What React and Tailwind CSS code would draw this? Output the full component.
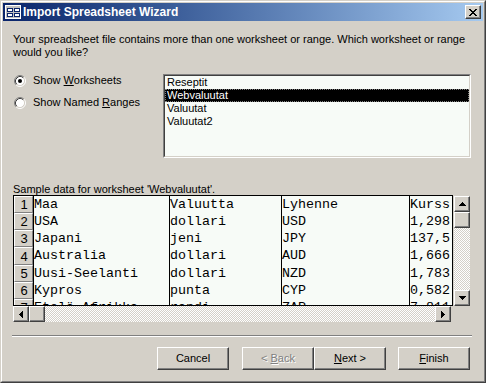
import React from "react";

const raised =
  "border border-t-white border-l-white border-r-[#404040] border-b-[#404040] shadow-[inset_-1px_-1px_0_#808080] bg-[#d4d0c8]";

function Tri({ dir }) {
  if (dir === "up")
    return (
      <svg width="7" height="4" shapeRendering="crispEdges">
        <path d="M3 0h1v1h-1z M2 1h3v1h-3z M1 2h5v1h-5z M0 3h7v1h-7z" fill="#000" />
      </svg>
    );
  if (dir === "down")
    return (
      <svg width="7" height="4" shapeRendering="crispEdges">
        <path d="M0 0h7v1h-7z M1 1h5v1h-5z M2 2h3v1h-3z M3 3h1v1h-1z" fill="#000" />
      </svg>
    );
  if (dir === "left")
    return (
      <svg width="4" height="7" shapeRendering="crispEdges">
        <path d="M0 3h1v1h-1z M1 2h1v3h-1z M2 1h1v5h-1z M3 0h1v7h-1z" fill="#000" />
      </svg>
    );
  return (
    <svg width="4" height="7" shapeRendering="crispEdges">
      <path d="M0 0h1v7h-1z M1 1h1v5h-1z M2 2h1v3h-1z M3 3h1v1h-1z" fill="#000" />
    </svg>
  );
}

function ArrowBtn({ dir }) {
  return (
    <div className={`${raised} w-[16px] h-[16px] shrink-0 flex items-center justify-center`}>
      <Tri dir={dir} />
    </div>
  );
}

function Thumb() {
  return <div className={`${raised} w-[16px] h-[16px] shrink-0`} />;
}

const checker =
  "bg-[image:repeating-conic-gradient(#ffffff_0_25%,#d4d0c8_0_50%)] bg-[length:2px_2px]";

function Radio({ checked }) {
  return (
    <svg width="12" height="12" viewBox="0 0 12 12" className="shrink-0">
      <circle cx="6" cy="6" r="4.5" fill="#fff" />
      <path d="M2.11 9.89 A5.5 5.5 0 0 1 9.89 2.11" fill="none" stroke="#808080" strokeWidth="1" />
      <path d="M9.89 2.11 A5.5 5.5 0 0 1 2.11 9.89" fill="none" stroke="#ffffff" strokeWidth="1" />
      <path d="M2.82 9.18 A4.5 4.5 0 0 1 9.18 2.82" fill="none" stroke="#404040" strokeWidth="1" />
      <path d="M9.18 2.82 A4.5 4.5 0 0 1 2.82 9.18" fill="none" stroke="#d4d0c8" strokeWidth="1" />
      {checked && <circle cx="6" cy="6" r="2" fill="#000" />}
    </svg>
  );
}

const rows = [
  ["1", "Maa", "Valuutta", "Lyhenne", "Kurss", "h-[17px]"],
  ["2", "USA", "dollari", "USD", "1,298", "h-[17px]"],
  ["3", "Japani", "jeni", "JPY", "137,5", "h-[17px]"],
  ["4", "Australia", "dollari", "AUD", "1,666", "h-[18px]"],
  ["5", "Uusi-Seelanti", "dollari", "NZD", "1,783", "h-[17px]"],
  ["6", "Kypros", "punta", "CYP", "0,582", "h-[17px]"],
  ["7", "Etelä-Afrikka", "randi", "ZAR", "7,811", "h-[17px]"],
];

export default function App() {
  return (
    <div className="w-[486px] h-[383px] bg-[#d4d0c8] border border-t-[#d4d0c8] border-l-[#d4d0c8] border-r-[#404040] border-b-[#404040] font-['Liberation_Sans',Arial,sans-serif] text-[11px] text-black overflow-hidden">
      <div className="h-full border border-t-white border-l-white border-r-[#808080] border-b-[#808080] p-px flex flex-col">
        {/* Title bar */}
        <div className="h-[18px] shrink-0 flex items-center bg-linear-to-r from-[#0a246a] to-[#a6caf0]">
          <div className="w-[19px] h-[18px] flex items-center justify-center pl-[1px]">
            <svg width="16" height="14" viewBox="0 0 16 14" shapeRendering="crispEdges">
              <rect x="0" y="0" width="16" height="14" fill="#ffffff" />
              <rect x="1" y="1" width="14" height="12" fill="#c0c0c0" />
              <rect x="2" y="3" width="5" height="3" fill="#ffffff" stroke="#0a246a" strokeWidth="1" />
              <rect x="2" y="8" width="5" height="3" fill="#ffffff" stroke="#0a246a" strokeWidth="1" />
              <rect x="9" y="3" width="5" height="3" fill="#ffffff" stroke="#0a246a" strokeWidth="1" />
              <rect x="9" y="8" width="5" height="3" fill="#ffffff" stroke="#0a246a" strokeWidth="1" />
            </svg>
          </div>
          <div className="text-white font-bold text-[12px] leading-[18px] ml-[1px]">Import Spreadsheet Wizard</div>
          <div className={`${raised} ml-auto mr-[2px] w-[16px] h-[14px] flex items-center justify-center`}>
            <svg width="8" height="7" shapeRendering="crispEdges">
              <path
                d="M0 0h2v1h-2z M6 0h2v1h-2z M1 1h2v1h-2z M5 1h2v1h-2z M2 2h4v1h-4z M3 3h2v1h-2z M2 4h4v1h-4z M1 5h2v1h-2z M5 5h2v1h-2z M0 6h2v1h-2z M6 6h2v1h-2z"
                fill="#000"
              />
            </svg>
          </div>
        </div>

        {/* Intro text */}
        <div className="pl-[10px] pt-[12px] leading-[13px]">
          Your spreadsheet file contains more than one worksheet or range. Which worksheet or range
          <br />
          would you like?
        </div>

        {/* Radios + list */}
        <div className="mt-[15px] pl-[11px] flex">
          <div className="w-[149px] flex flex-col gap-[9px]">
            <div className="h-[13px] flex items-center">
              <Radio checked />
              <span className="ml-[7px] leading-[13px]">
                Show <span className="underline underline-offset-1">W</span>orksheets
              </span>
            </div>
            <div className="h-[13px] flex items-center">
              <Radio />
              <span className="ml-[7px] leading-[13px]">
                Show Named <span className="underline underline-offset-1">R</span>anges
              </span>
            </div>
          </div>
          <div className="w-[308px] h-[84px] border border-t-[#808080] border-l-[#808080] border-r-white border-b-white">
            <div className="h-full border border-t-[#404040] border-l-[#404040] border-r-[#d4d0c8] border-b-[#d4d0c8] bg-[#f7fbf7]">
              <div className="h-[13px] leading-[13px] pl-[2px]">Reseptit</div>
              <div className="h-[13px] leading-[13px] pl-[2px] bg-black text-white outline outline-1 outline-dotted outline-[#808080] -outline-offset-1">
                Webvaluutat
              </div>
              <div className="h-[13px] leading-[13px] pl-[2px]">Valuutat</div>
              <div className="h-[13px] leading-[13px] pl-[2px]">Valuutat2</div>
            </div>
          </div>
        </div>

        {/* Sample data label */}
        <div className="mt-[25px] pl-[10px] leading-[12px] h-[12px]">Sample data for worksheet 'Webvaluutat'.</div>

        {/* Grid */}
        <div className="pl-[10px] flex flex-col">
          <div className="flex">
            <div className="w-[440px] h-[111px] border border-black bg-[#f7fbf7] overflow-hidden font-['Liberation_Mono','Courier_New',monospace] text-[13.33px]">
              {rows.map((r) => (
                <div key={r[0]} className={`flex ${r[5]}`}>
                  <div className="w-[20px] shrink-0 border-r border-black">
                    <div className="h-full border border-t-white border-l-white border-r-[#808080] border-b-[#808080] bg-[#d4d0c8] flex items-center justify-center font-['Liberation_Sans',Arial,sans-serif] text-[13px] leading-none pl-[1px]">
                      {r[0]}
                    </div>
                  </div>
                  <div className="w-[136px] shrink-0 border-r border-black flex items-center whitespace-nowrap overflow-hidden">{r[1]}</div>
                  <div className="w-[112px] shrink-0 border-r border-black flex items-center whitespace-nowrap overflow-hidden">{r[2]}</div>
                  <div className="w-[128px] shrink-0 border-r border-black flex items-center whitespace-nowrap overflow-hidden">{r[3]}</div>
                  <div className="flex-1 flex items-center whitespace-nowrap overflow-hidden">{r[4]}</div>
                </div>
              ))}
            </div>
            <div className="ml-px mt-px w-[16px] h-[110px] flex flex-col">
              <ArrowBtn dir="up" />
              <Thumb />
              <div className={`flex-1 ${checker}`} />
              <ArrowBtn dir="down" />
            </div>
          </div>
          <div className="w-[438px] h-[16px] flex">
            <ArrowBtn dir="left" />
            <Thumb />
            <div className={`flex-1 ${checker}`} />
            <ArrowBtn dir="right" />
          </div>
        </div>

        {/* Separator */}
        <div className="mt-[13px] ml-[9px] w-[460px] h-[2px] border-t border-t-[#808080] border-b border-b-white" />

        {/* Buttons */}
        <div className="mt-[10px] flex pl-[154px]">
          <div className={`${raised} w-[72px] h-[23px] flex items-center justify-center`}>Cancel</div>
          <div className={`${raised} ml-[13px] w-[72px] h-[23px] flex items-center justify-center text-[#808080] [text-shadow:1px_1px_0_#fff]`}>
            &lt; <span className="underline underline-offset-1 ml-[3px]">B</span>ack
          </div>
          <div className={`${raised} w-[72px] h-[23px] flex items-center justify-center`}>
            <span className="underline underline-offset-1">N</span>ext &gt;
          </div>
          <div className={`${raised} ml-[12px] w-[72px] h-[23px] flex items-center justify-center`}>
            <span className="underline underline-offset-1">F</span>inish
          </div>
        </div>
      </div>
    </div>
  );
}
